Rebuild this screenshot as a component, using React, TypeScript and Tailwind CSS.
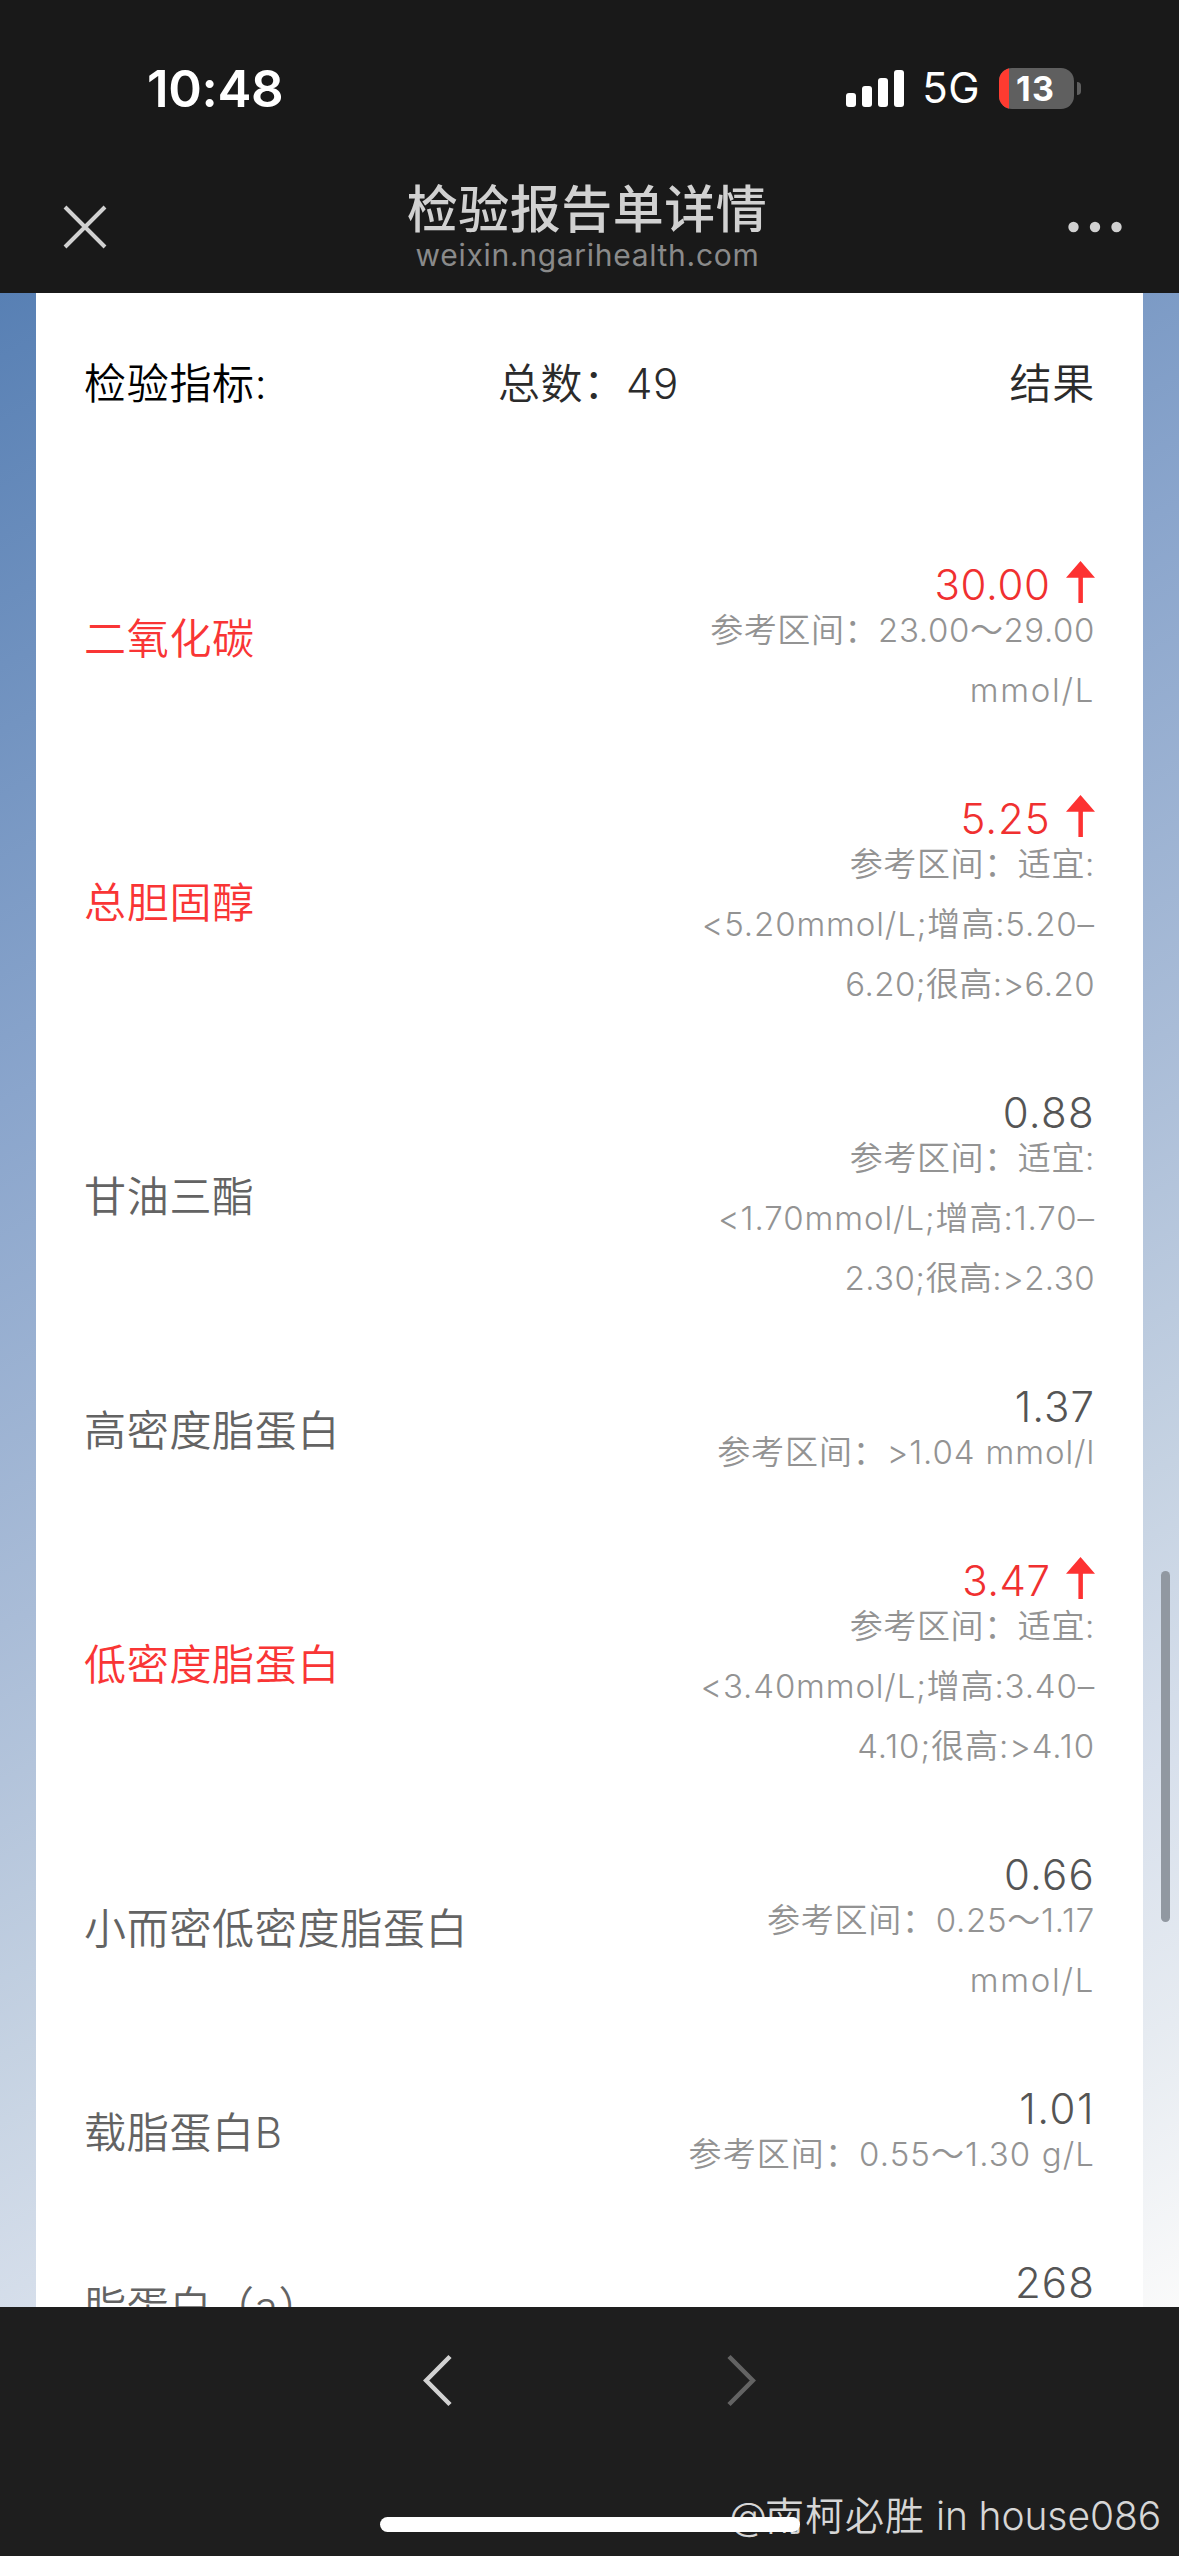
import React from "react";

type Line = { text: string; spacing: string };
type Item = {
  name: string;
  value: string;
  valueSpacing: string;
  high?: boolean;
  lines: Line[];
};

const items: Item[] = [
  {
    name: "二氧化碳",
    value: "30.00",
    valueSpacing: "tracking-[0.6px]",
    high: true,
    lines: [
      { text: "参考区间：23.00～29.00", spacing: "tracking-[0.6px]" },
      { text: "mmol/L", spacing: "tracking-[1.7px]" },
    ],
  },
  {
    name: "总胆固醇",
    value: "5.25",
    valueSpacing: "tracking-[0.9px]",
    high: true,
    lines: [
      { text: "参考区间：适宜:", spacing: "tracking-[0.62px]" },
      { text: "<5.20mmol/L;增高:5.20–", spacing: "tracking-[0.9px]" },
      { text: "6.20;很高:>6.20", spacing: "tracking-[0.45px]" },
    ],
  },
  {
    name: "甘油三酯",
    value: "0.88",
    valueSpacing: "tracking-[1.3px]",
    lines: [
      { text: "参考区间：适宜:", spacing: "tracking-[0.62px]" },
      { text: "<1.70mmol/L;增高:1.70–", spacing: "tracking-[0.93px]" },
      { text: "2.30;很高:>2.30", spacing: "tracking-[0.45px]" },
    ],
  },
  {
    name: "高密度脂蛋白",
    value: "1.37",
    valueSpacing: "tracking-[1px]",
    lines: [{ text: "参考区间：>1.04 mmol/l", spacing: "tracking-[0.9px]" }],
  },
  {
    name: "低密度脂蛋白",
    value: "3.47",
    valueSpacing: "tracking-[0.5px]",
    high: true,
    lines: [
      { text: "参考区间：适宜:", spacing: "tracking-[0.62px]" },
      { text: "<3.40mmol/L;增高:3.40–", spacing: "tracking-[0.85px]" },
      { text: "4.10;很高:>4.10", spacing: "tracking-[0.95px]" },
    ],
  },
  {
    name: "小而密低密度脂蛋白",
    value: "0.66",
    valueSpacing: "tracking-[1.2px]",
    lines: [
      { text: "参考区间：0.25～1.17", spacing: "tracking-[0.75px]" },
      { text: "mmol/L", spacing: "tracking-[1.7px]" },
    ],
  },
  {
    name: "载脂蛋白B",
    value: "1.01",
    valueSpacing: "tracking-[1.5px]",
    lines: [{ text: "参考区间：0.55～1.30 g/L", spacing: "tracking-[1.1px]" }],
  },
  {
    name: "脂蛋白（a）",
    value: "268",
    valueSpacing: "tracking-[1.1px]",
    lines: [{ text: "", spacing: "tracking-normal" }],
  },
];

function UpArrow() {
  return (
    <svg className="mr-[0.5px] mb-[7px] ml-[15px] h-[42px] w-[29px] shrink-0" viewBox="0 0 29 42">
      <path d="M14.5 0 L29 16.7 H16.9 V42 H12.4 V16.7 H0 Z" fill="#fd3232" />
    </svg>
  );
}

function Row({ item }: { item: Item }) {
  return (
    <div className="flex shrink-0 items-center justify-between">
      <div
        className={`pt-[2px] text-[42px] leading-[60px] font-[350] tracking-[0.7px] ${
          item.high ? "text-[#f93535]" : "text-[#636363]"
        }`}
      >
        {item.name}
      </div>
      <div className="flex flex-col items-end pt-[49px] pb-[35px]">
        <div
          className={`flex h-[30px] items-center text-[42px] leading-[30px] font-[350] ${
            item.high ? "text-[#f03030]" : "text-[#555]"
          }`}
        >
          <span className={item.valueSpacing}>{item.value}</span>
          {item.high && <UpArrow />}
        </div>
        {item.lines.map((line) => (
          <div
            key={line.text}
            className={`h-[60px] text-[33px] leading-[60px] font-[350] whitespace-nowrap text-[#939393] ${line.spacing}`}
          >
            {line.text}
          </div>
        ))}
      </div>
    </div>
  );
}

function StatusBar() {
  return (
    <div className="flex h-[176px] items-center justify-between pr-[98px] pl-[147px] text-white">
      <div className="text-[51px] leading-none font-semibold tracking-[-0.36px]">10:48</div>
      <div className="flex items-center">
        <div className="flex h-[37px] items-end gap-[6px]">
          <div className="h-[14px] w-[10px] rounded-[3px] bg-white" />
          <div className="h-[21px] w-[10px] rounded-[3px] bg-white" />
          <div className="h-[29px] w-[10px] rounded-[3px] bg-white" />
          <div className="h-[37px] w-[10px] rounded-[3px] bg-white" />
        </div>
        <div className="ml-[18px] text-[42px] leading-none tracking-[0.4px]">5G</div>
        <div className="ml-[19px] flex h-[41px] w-[75px] overflow-hidden rounded-[13px] bg-[#5f5f5f]">
          <div className="w-[10px] bg-[#ff3b30]" />
          <div className="pl-[7px] text-[34px] leading-[41px] font-bold tracking-[1.3px]">13</div>
        </div>
        <div className="ml-[3px] h-[13px] w-[4px] rounded-r-full bg-[#5f5f5f]" />
      </div>
    </div>
  );
}

function NavBar() {
  return (
    <div className="flex h-[117px] items-start justify-between pr-[57px] pl-[62px]">
      <svg className="mt-[28px] h-[46px] w-[46px]" viewBox="0 0 46 46">
        <path d="M3 3 L43 43 M43 3 L3 43" stroke="#d1d1d1" strokeWidth="4" fill="none" />
      </svg>
      <div className="flex flex-col items-center pt-[2px]">
        <div className="-ml-[2px] text-[51px] leading-[64px] font-medium tracking-[0.5px] text-[#d1d1d1]">
          检验报告单详情
        </div>
        <div className="-mt-[3px] -ml-[1px] text-[30px] leading-[32px] tracking-[0.7px] text-[#8a8a8a]">
          weixin.ngarihealth.com
        </div>
      </div>
      <svg className="mt-[45px] h-[12px] w-[54px]" viewBox="0 0 54 12">
        <circle cx="5.5" cy="6" r="5.2" fill="#d1d1d1" />
        <circle cx="27" cy="6" r="5.2" fill="#d1d1d1" />
        <circle cx="48.5" cy="6" r="5.2" fill="#d1d1d1" />
      </svg>
    </div>
  );
}

export default function App() {
  return (
    <div className="relative flex h-[2556px] w-[1179px] flex-col overflow-hidden bg-[#191919] font-['Inter','Noto_Sans_CJK_SC',sans-serif]">
      <header className="h-[293px] shrink-0">
        <StatusBar />
        <NavBar />
      </header>

      <main className="relative h-[2014px] shrink-0 overflow-hidden bg-[linear-gradient(153deg,#5880b4_0%,#8aa5cc_31%,#a9bcd7_51%,#c5d2e2_67.5%,#d8e0ec_79%,#e6ebf1_89%,#fafafa_100%)] px-[36px]">
        <div className="flex h-[2014px] flex-col overflow-hidden bg-white pr-[48px] pl-[48px]">
          <div className="grid h-[228px] shrink-0 grid-cols-3 pt-[61px] text-[42px] leading-[60px]">
            <div className="font-[350] tracking-[0.7px] text-black">检验指标:</div>
            <div className="pr-[2px] text-center font-[350] tracking-[0.7px] text-[#2b2b2b]">总数：49</div>
            <div className="text-right font-[350] tracking-[0.8px] text-[#2b2b2b]">结果</div>
          </div>
          {items.map((item) => (
            <Row key={item.name} item={item} />
          ))}
        </div>
        <div className="absolute top-[1278px] right-[9px] h-[351px] w-[9px] rounded-full bg-[#9198a1]" />
      </main>

      <footer className="relative h-[249px] shrink-0 bg-[#1e1e1e]">
        <div className="flex justify-between px-[422px] pt-[47px]">
          <svg className="h-[54px] w-[31px]" viewBox="0 0 31 54">
            <path d="M28 2.5 L4.2 26.5 L28 50.5" stroke="#d2d2d2" strokeWidth="4.5" fill="none" />
          </svg>
          <svg className="h-[54px] w-[31px]" viewBox="0 0 31 54">
            <path d="M3 2.5 L26.8 26.5 L3 50.5" stroke="#636363" strokeWidth="4.5" fill="none" />
          </svg>
        </div>
        <div className="absolute right-[18px] bottom-[10px] flex text-[39px] leading-[60px] font-[350] whitespace-pre text-[#d6d6d6]">
          <span className="-mr-[2px]">@</span>
          <span className="tracking-[1px]">南柯必胜</span>
          <span className="-tracking-[0.1px]"> in house086</span>
        </div>
        <div className="absolute bottom-[24px] left-[380px] h-[15px] w-[420px] rounded-full bg-white" />
      </footer>
    </div>
  );
}
